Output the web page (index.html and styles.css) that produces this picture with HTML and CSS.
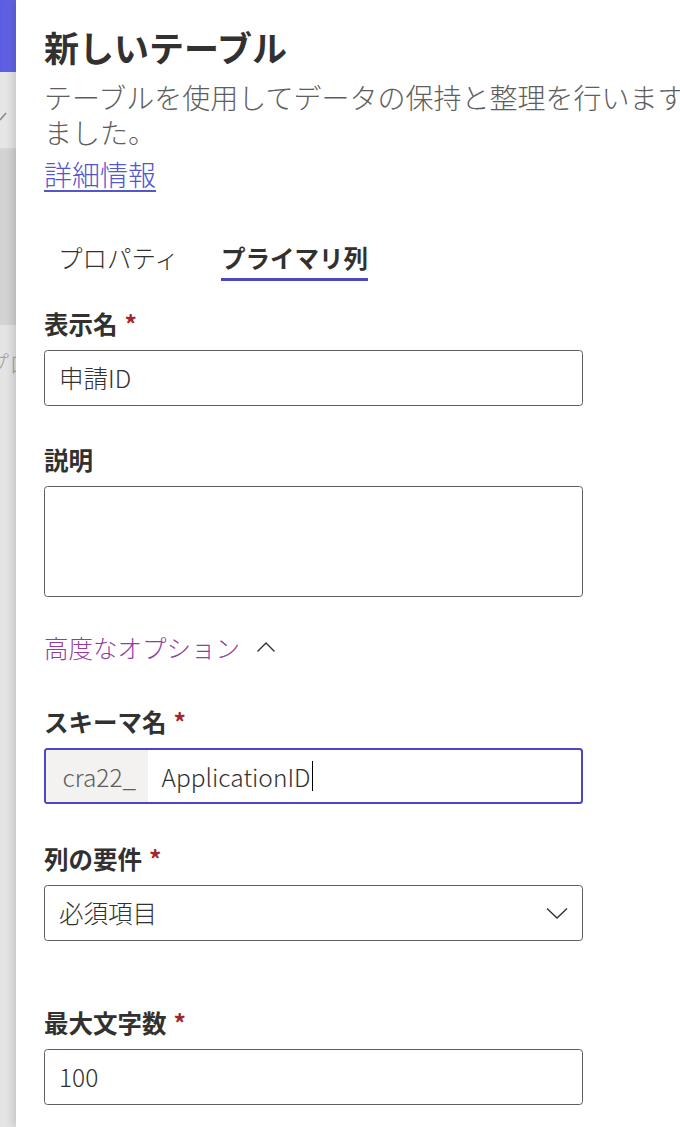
FILE: index.html
```html
<!DOCTYPE html>
<html lang="ja">
<head>
<meta charset="utf-8">
<title>新しいテーブル</title>
<link rel="stylesheet" href="styles.css">
</head>
<body>
<div class="page">
  <div class="backdrop">
    <div class="bd-header"></div>
    <div class="bd-nav">
      <svg class="bd-icon" width="16" height="20" viewBox="0 0 16 20"><path d="M0 14 L6 7" fill="none" stroke="#8a8a8a" stroke-width="1.6"/></svg>
    </div>
    <div class="bd-mid"></div>
    <div class="bd-list"><span class="bd-text">プロ</span></div>
  </div>
  <div class="panel">
    <h1 class="title">新しいテーブル</h1>
    <p class="desc">テーブルを使用してデータの保持と整理を行います。以前はエンティティと呼ばれていました。</p>
    <div class="more-row"><a class="more" href="#">詳細情報</a></div>

    <div class="tabs">
      <div class="tab"><span class="tab-text">プロパティ</span></div>
      <div class="tab active"><span class="tab-text">プライマリ列</span></div>
    </div>

    <div class="form">
      <div class="field field-a">
        <div class="label">表示名<span class="req">*</span></div>
        <div class="input"><span class="value">申請ID</span></div>
      </div>

      <div class="field">
        <div class="label">説明</div>
        <div class="input textarea"></div>
      </div>

      <div class="adv">
        <span class="adv-text">高度なオプション</span>
        <svg class="adv-chev" width="20" height="12" viewBox="0 0 20 12"><path d="M1.5 10.5 L10 2 L18.5 10.5" fill="none" stroke="#323130" stroke-width="1.4"/></svg>
      </div>

      <div class="field field-a">
        <div class="label">スキーマ名<span class="req">*</span></div>
        <div class="input focused">
          <span class="prefix">cra22_</span>
          <span class="value schema">ApplicationID<span class="caret"></span></span>
        </div>
      </div>

      <div class="field field-b">
        <div class="label">列の要件<span class="req">*</span></div>
        <div class="input dropdown">
          <span class="value">必須項目</span>
          <svg class="dd-chev" width="22" height="12" viewBox="0 0 22 12"><path d="M1 1.5 L11 11 L21 1.5" fill="none" stroke="#323130" stroke-width="1.4"/></svg>
        </div>
      </div>

      <div class="field">
        <div class="label">最大文字数<span class="req">*</span></div>
        <div class="input"><span class="value">100</span></div>
      </div>
    </div>
  </div>
</div>
</body>
</html>
```

FILE: styles.css
```css
html, body {
  margin: 0;
  padding: 0;
  height: 100%;
  overflow: hidden;
  background: #ffffff;
}

body {
  font-family: "Noto Sans CJK JP", "Noto Sans", sans-serif;
  color: #323130;
}

.page {
  display: flex;
  width: 680px;
  height: 1127px;
  overflow: hidden;
}

/* dimmed page behind the panel */
.backdrop {
  width: 16px;
  flex: 0 0 16px;
  display: flex;
  flex-direction: column;
  overflow: hidden;
}

.bd-header {
  height: 72px;
  background: linear-gradient(90deg, #5b5ce2, #6466e6);
}

.bd-nav {
  height: 78px;
  background: #e6e6e6;
  border-bottom: 2px solid #d8d8d8;
  display: flex;
  align-items: flex-start;
  padding-top: 34px;
  box-sizing: border-box;
}

.bd-icon {
  display: block;
}

.bd-mid {
  height: 175px;
  background: #d3d3d3;
}

.bd-list {
  flex: 1;
  background: #e4e4e4;
  padding-top: 20px;
  white-space: nowrap;
}

.bd-text {
  display: inline-block;
  margin-left: -15px;
  font-size: 24px;
  line-height: 35px;
  color: #a6a6a6;
  font-weight: 300;
}

/* panel */
.panel {
  flex: 1;
  min-width: 0;
  background: #ffffff;
  padding: 23px 0 0 28px;
  box-shadow: -3px 0 8px rgba(0, 0, 0, 0.14);
  overflow: hidden;
}

.title {
  margin: 0;
  font-size: 35px;
  line-height: 48px;
  font-weight: 700;
  color: #323130;
  white-space: nowrap;
}

.desc {
  margin: 8.5px 0 0;
  width: 1096px;
  font-size: 28px;
  line-height: 35.5px;
  font-weight: 300;
  color: #605e5c;
}

.more-row {
  margin-top: 6px;
  line-height: 35px;
}

.more {
  font-size: 28px;
  line-height: 35px;
  font-weight: 300;
  color: #5457cc;
  text-decoration: underline;
  text-underline-offset: 4px;
}

/* tabs */
.tabs {
  display: flex;
  margin-top: 43px;
}

.tab {
  padding: 0 14px;
  margin-right: 14px;
}

.tab-text {
  display: block;
  font-size: 24.5px;
  line-height: 35px;
  padding-bottom: 3.5px;
  border-bottom: 3px solid transparent;
  font-weight: 300;
  color: #323130;
  white-space: nowrap;
}

.tab.active .tab-text {
  font-weight: 700;
  border-bottom-color: #4b48c0;
}

/* form */
.form {
  width: 539px;
  margin-top: 16px;
  display: flex;
  flex-direction: column;
}

.field {
  display: flex;
  flex-direction: column;
}

.field-a {
  margin-bottom: 28px;
}

.field-b {
  margin-bottom: 55.5px;
}

.label {
  font-size: 24.5px;
  line-height: 35px;
  padding: 8.75px 0;
  font-weight: 700;
  color: #323130;
  white-space: nowrap;
}

.req {
  color: #a4262c;
  padding-left: 7px;
  font-weight: 700;
}

.input {
  height: 56px;
  box-sizing: border-box;
  border: 1px solid #605e5c;
  border-radius: 3.5px;
  padding: 0 14px;
  display: flex;
  align-items: center;
  font-size: 24.5px;
  font-weight: 300;
  color: #323130;
  background: #ffffff;
}

.textarea {
  height: 111px;
}

.value {
  line-height: 35px;
  white-space: nowrap;
}

.focused {
  border: 2.5px solid #4a47c1;
  padding: 0;
  overflow: hidden;
}

.prefix {
  align-self: stretch;
  display: flex;
  align-items: center;
  background: #f3f2f1;
  color: #605e5c;
  padding: 0 17px 0 16.5px;
  width: 68px;
}

.schema {
  padding-left: 14px;
  display: flex;
  align-items: center;
}

.caret {
  display: inline-block;
  width: 1.5px;
  height: 30px;
  background: #000000;
  margin-left: 1px;
}

.dropdown {
  justify-content: space-between;
  padding-right: 14px;
}

.dd-chev {
  display: block;
}

.adv {
  display: flex;
  align-items: center;
  margin: 32.5px 0 31px;
  height: 35px;
}

.adv-text {
  font-size: 24.5px;
  line-height: 35px;
  font-weight: 300;
  color: #923c9f;
  white-space: nowrap;
}

.adv-chev {
  display: block;
  margin-left: 16px;
}
```
